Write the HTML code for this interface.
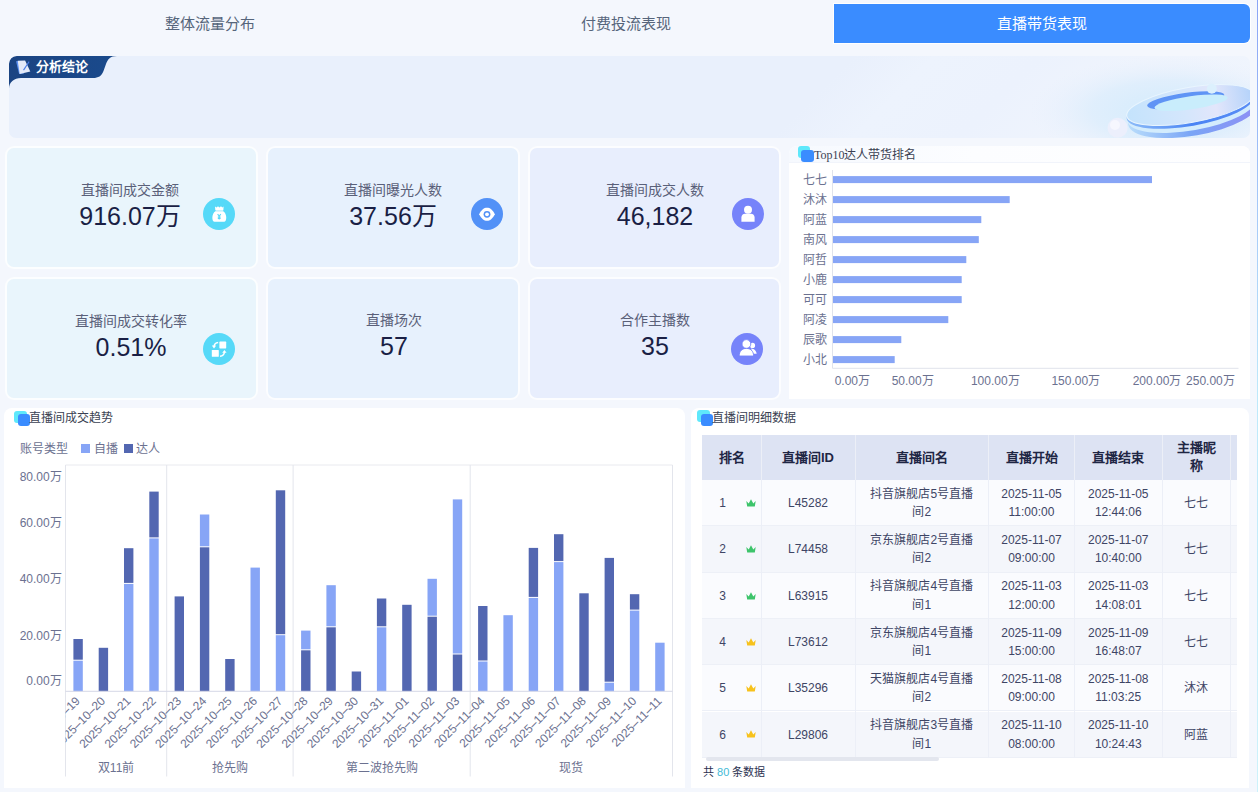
<!DOCTYPE html>
<html lang="zh-CN"><head><meta charset="utf-8">
<style>
*{box-sizing:border-box;margin:0;padding:0}
html,body{width:1258px;height:792px;overflow:hidden;background:#f4f7fd;font-family:"Liberation Sans",sans-serif;position:relative}
.abs{position:absolute}
.tab{position:absolute;top:4px;height:39px;line-height:41px;text-align:center;font-family:"Liberation Serif",serif;font-size:15px;color:#56657b}
.tab.active{background:#3a8cff;color:#fff;border-radius:0 6px 6px 0;box-shadow:0 0 0 1px #fff}
.card{position:absolute;border:2px solid rgba(255,255,255,0.85);border-radius:9px}
.klabel{position:absolute;font-size:14px;color:#5a6079;text-align:center;white-space:nowrap;line-height:16px}
.kval{position:absolute;font-size:25px;color:#1a1f45;text-align:center;white-space:nowrap;line-height:28px}
.kicon{position:absolute;width:32px;height:32px;border-radius:50%}
.panel{position:absolute;background:#fff;border-radius:8px 8px 0 0}
.ptitle{position:absolute;font-family:"Liberation Serif",serif;font-size:12px;color:#3a3f52;white-space:nowrap;line-height:14px}
.sq1{position:absolute;width:12.5px;height:12px;border-radius:3px;background:#5ee8fb}
.sq2{position:absolute;width:12.5px;height:12px;border-radius:3px;background:#3a8cff}
svg text.ax{font-family:"Liberation Sans",sans-serif;font-size:12px;fill:#6b7190}
.thead{position:absolute;background:#dde3f3}
.th{position:absolute;text-align:center;font-weight:bold;font-size:13px;color:#1f2644}
.tr{position:absolute;left:702px;width:535px;border-bottom:1px solid #edf0f7}
.td{position:absolute;text-align:center;font-size:12px;color:#3e4565;white-space:nowrap}
.crown{display:block}
</style></head><body>
<!-- tabs -->
<div class="tab" style="left:2px;width:416px">整体流量分布</div>
<div class="tab" style="left:418px;width:416px">付费投流表现</div>
<div class="tab active" style="left:834px;width:416px">直播带货表现</div>
<div class="abs" style="left:1257px;top:0;width:1px;height:792px;background:linear-gradient(#8aa4f6,#bde9fb 50%,#cdf2fb)"></div>

<!-- banner -->
<div class="abs" style="left:9px;top:56px;width:1241px;height:81.5px;border-radius:7px;background:linear-gradient(135deg,#e9f0fc 0%,#e9f0fc 64%,#edf3fd 70%,#ecf2fd 78%,#eff4fd 86%,#f0f5fd 100%);overflow:hidden">
  <svg class="abs" style="left:0;top:0" width="1241" height="82" viewBox="0 0 1241 82">
    <defs>
      <radialGradient id="glow" cx="0.5" cy="0.5" r="0.5"><stop offset="0" stop-color="#d2ebfc"/><stop offset="0.55" stop-color="#dcedfc" stop-opacity="0.8"/><stop offset="1" stop-color="#e9f0fc" stop-opacity="0"/></radialGradient>
      <linearGradient id="band" x1="0" y1="0" x2="1" y2="0"><stop offset="0" stop-color="#b8dcfb"/><stop offset="0.45" stop-color="#7aa5f6"/><stop offset="1" stop-color="#8f8ef4"/></linearGradient><linearGradient id="stripe" x1="0" y1="0" x2="1" y2="0"><stop offset="0" stop-color="#8dbcf8"/><stop offset="0.5" stop-color="#4a84f4"/><stop offset="1" stop-color="#5b8ef5"/></linearGradient>
      <linearGradient id="face" x1="0" y1="0" x2="1" y2="0"><stop offset="0" stop-color="#c4e3fc"/><stop offset="0.45" stop-color="#d4e6fc"/><stop offset="0.7" stop-color="#e2e6fb"/><stop offset="1" stop-color="#b3d2fa"/></linearGradient>
      <linearGradient id="tagg" x1="0" y1="0" x2="1" y2="0"><stop offset="0" stop-color="#1b4482"/><stop offset="1" stop-color="#1a4a8c"/></linearGradient>
    </defs>
    <ellipse cx="1160" cy="55" rx="140" ry="55" fill="url(#glow)"/>
    <g transform="rotate(-10 1181 50)">
      <ellipse cx="1183" cy="58" rx="66" ry="22" fill="url(#band)"/>
      <ellipse cx="1182" cy="54.5" rx="65" ry="20" fill="#d3ecfd"/>
      <ellipse cx="1181" cy="51.5" rx="64.5" ry="18.5" fill="url(#stripe)"/>
      <ellipse cx="1181" cy="49" rx="64" ry="17.5" fill="url(#face)" stroke="#e9f5fe" stroke-width="1"/>
    </g>
    <g transform="rotate(-8 1180 46)">
      <ellipse cx="1177" cy="44" rx="39" ry="7.5" fill="#5f94f5"/>
      <ellipse cx="1182" cy="47" rx="37" ry="6.5" fill="#c9edfc"/>
    </g>
    <circle cx="1202.8" cy="32.8" r="5" fill="#dcf0fd"/>
    <circle cx="1108.6" cy="71.8" r="10" fill="#eceffc"/><circle cx="1106" cy="69" r="5" fill="#f6f7fe"/>
    <path d="M0 8 A8 8 0 0 1 8 0 L108 0 C101 0 99 3 97 8 L94.5 15 C92.5 20 89.5 22 84 22 L12 22 C5 22 0 26 0 33 Z" fill="url(#tagg)"/>
    <g transform="translate(6.5,4)"><path d="M0.5 1.2 L4 1 L8.5 13.6 L3.6 13.9 Z" fill="#5a8ff0"/><path d="M2.2 0.8 L9.6 0.5 L14.8 11.4 L4.2 13.9 Z" fill="#e4eaf8"/><path d="M7.6 9.8 L13.2 1.2 L14 1.9 L8.5 10.4 Z" fill="#4a7ee8"/></g>
  </svg>
  <div class="abs" style="left:27px;top:3px;font-size:13px;font-weight:bold;color:#fff;line-height:16px;white-space:nowrap">分析结论</div>
</div>

<!-- KPI cards -->
<div class="card" style="left:5px;top:146px;width:253px;height:123px;background:#e9f5fc"></div>
<div class="card" style="left:266px;top:146px;width:254px;height:123px;background:#e7f1fd"></div>
<div class="card" style="left:528px;top:146px;width:253px;height:123px;background:#e8eefd"></div>
<div class="card" style="left:5px;top:277px;width:253px;height:123px;background:#e9f5fc"></div>
<div class="card" style="left:266px;top:277px;width:254px;height:123px;background:#e7f1fd"></div>
<div class="card" style="left:528px;top:277px;width:253px;height:123px;background:#e8eefd"></div>

<div class="klabel" style="left:30px;top:182px;width:200px">直播间成交金额</div>
<div class="kval" style="left:30px;top:202px;width:200px">916.07万</div>
<svg class="abs" style="left:203px;top:198px" width="32" height="32" viewBox="0 0 32 32"><circle cx="16" cy="16" r="16" fill="#56d9f8"/>
<path d="M12 8.6 L13.6 9.6 L15 8.2 L16.4 9.4 L18 8.2 L19.3 9.6 L20.6 8.6 L20.4 12 L12.3 12 Z" fill="#fff"/>
<rect x="12.6" y="12" width="7.6" height="1.2" fill="#c8f2fd"/>
<path d="M12.4 13.2 L20.2 13.2 C24 15 24.2 23.8 21 23.8 L11.6 23.8 C8.4 23.8 8.6 15 12.4 13.2 Z" fill="#fff"/>
<path d="M14.6 16.2 L16.2 18.2 L17.8 16.2 M16.2 18.2 L16.2 21.6 M14.8 19 L17.6 19 M14.8 20.4 L17.6 20.4" stroke="#56d9f8" stroke-width="1.1" fill="none"/>
</svg>

<div class="klabel" style="left:293px;top:182px;width:200px">直播间曝光人数</div>
<div class="kval" style="left:293px;top:202px;width:200px">37.56万</div>
<svg class="abs" style="left:471px;top:198px" width="32" height="32" viewBox="0 0 32 32"><circle cx="16" cy="16" r="16" fill="#5291f7"/>
<path d="M8.2 16.3 C10.5 11.6 13 9.8 16 9.8 C19 9.8 21.5 11.6 23.8 16.3 C21.5 21 19 22.8 16 22.8 C13 22.8 10.5 21 8.2 16.3 Z" fill="#fff"/>
<circle cx="16" cy="16.3" r="3.4" fill="#5291f7"/><circle cx="16" cy="16.3" r="1.9" fill="#fff"/>
</svg>

<div class="klabel" style="left:555px;top:182px;width:200px">直播间成交人数</div>
<div class="kval" style="left:555px;top:202px;width:200px">46,182</div>
<svg class="abs" style="left:731.5px;top:198px" width="32" height="32" viewBox="0 0 32 32"><circle cx="16" cy="16" r="16" fill="#7683fa"/>
<circle cx="16" cy="11.8" r="4" fill="#fff"/>
<path d="M9.4 23.7 L9.4 19.5 C9.4 17.2 11 15.7 13 15.7 L19 15.7 C21 15.7 22.6 17.2 22.6 19.5 L22.6 23.7 Z" fill="#fff"/>
</svg>

<div class="klabel" style="left:31px;top:313px;width:200px">直播间成交转化率</div>
<div class="kval" style="left:31px;top:333px;width:200px">0.51%</div>
<svg class="abs" style="left:203px;top:333px" width="32" height="32" viewBox="0 0 32 32"><circle cx="16" cy="16" r="16" fill="#56d9f8"/>
<rect x="16.4" y="8.6" width="6.8" height="6.8" rx="0.6" fill="#fff"/>
<rect x="8.8" y="17" width="7" height="6.8" rx="0.6" fill="#fff"/>
<path d="M15.2 9.4 C12.6 9.6 11.2 11 11 13.6" stroke="#fff" stroke-width="1.5" fill="none"/>
<path d="M8.8 12.6 L11 15.4 L13.2 12.6 Z" fill="#fff"/>
<path d="M17 23.2 C19.6 23 21.2 21.6 21.4 19" stroke="#fff" stroke-width="1.5" fill="none"/>
<path d="M19.2 19.8 L21.4 17 L23.6 19.8 Z" fill="#fff"/>
</svg>

<div class="klabel" style="left:294px;top:312px;width:200px">直播场次</div>
<div class="kval" style="left:294px;top:332px;width:200px">57</div>

<div class="klabel" style="left:555px;top:312px;width:200px">合作主播数</div>
<div class="kval" style="left:555px;top:332px;width:200px">35</div>
<svg class="abs" style="left:731px;top:333px" width="32" height="32" viewBox="0 0 32 32"><circle cx="16" cy="16" r="16" fill="#7683fa"/>
<circle cx="21.5" cy="12.4" r="2.6" fill="#fff"/>
<path d="M20 15.6 C23.2 15.4 25.4 18.4 25.6 20.8 L22 20.8 Z" fill="#fff"/>
<circle cx="15.4" cy="11" r="4.4" fill="#fff" stroke="#7683fa" stroke-width="0.9"/>
<path d="M8.2 23 C8.2 18.2 11 15.4 15.4 15.4 C19.8 15.4 22.6 18.2 22.6 23 Z" fill="#fff" stroke="#7683fa" stroke-width="0.9"/>
</svg>

<!-- panels -->
<div class="panel" style="left:789px;top:146px;width:461px;height:253px"></div>
<div class="abs" style="left:789px;top:146px;width:461px;height:17px;border-radius:8px 8px 0 0;background:linear-gradient(90deg,#f6f9fe,#fcfdff 40%,#fefeff);border-bottom:1px solid #f1f4fb"></div>
<div class="sq1" style="left:797.5px;top:146px"></div>
<div class="sq2" style="left:801px;top:150px"></div>
<div class="ptitle" style="left:814px;top:148px">Top10达人带货排名</div>

<div class="panel" style="left:4px;top:408px;width:680.5px;height:380px"></div>
<div class="sq1" style="left:14px;top:410.7px"></div>
<div class="sq2" style="left:17.5px;top:414px"></div>
<div class="ptitle" style="left:28.5px;top:411px">直播间成交趋势</div>
<div class="abs" style="left:19.5px;top:441px;font-size:12px;color:#6b7190;line-height:16px">账号类型</div>
<div class="abs" style="left:80.6px;top:444.4px;width:9px;height:9px;background:#87a5f6"></div>
<div class="abs" style="left:94px;top:441px;font-size:12px;color:#6b7190;line-height:16px">自播</div>
<div class="abs" style="left:123.8px;top:444.4px;width:9px;height:9px;background:#5367b1"></div>
<div class="abs" style="left:136.4px;top:441px;font-size:12px;color:#6b7190;line-height:16px">达人</div>

<div class="panel" style="left:690.5px;top:408px;width:558.5px;height:380px"></div>
<div class="sq1" style="left:697px;top:410px"></div>
<div class="sq2" style="left:700.5px;top:414px"></div>
<div class="ptitle" style="left:712px;top:411px">直播间明细数据</div>

<div class="thead" style="left:702px;top:435px;width:535px;height:45px"></div>
<div class="th" style="left:702px;top:435px;width:59px;line-height:45px">排名</div>
<div class="th" style="left:761px;top:435px;width:94px;line-height:45px">直播间ID</div>
<div class="th" style="left:855px;top:435px;width:133.5px;line-height:45px">直播间名</div>
<div class="th" style="left:988.5px;top:435px;width:86.0px;line-height:45px">直播开始</div>
<div class="th" style="left:1074.5px;top:435px;width:87.5px;line-height:45px">直播结束</div>
<div class="th" style="left:1162px;top:439px;width:68.5px;line-height:18px">主播昵<br>称</div>
<div class="tr" style="top:480.0px;height:46.3px;background:#fafbfe"></div>
<div class="td" style="left:714.5px;top:494.1px;width:16px;line-height:18px">1</div>
<div style="position:absolute;left:745.5px;top:498.8px;width:10px;height:8px"><svg class="crown" width="10" height="8" viewBox="0 0 10 8"><path d="M0.3 2 L2.7 4.6 L5 0.3 L7.3 4.6 L9.7 2 L8.8 7.6 L1.2 7.6 Z" fill="#3dc46b"/></svg></div>
<div class="td" style="left:761px;top:494.1px;width:94px;line-height:18px">L45282</div>
<div class="td" style="left:855px;top:484.6px;width:133.5px;line-height:18.5px">抖音旗舰店5号直播<br>间2</div>
<div class="td" style="left:988.5px;top:484.6px;width:86px;line-height:18.5px">2025-11-05<br>11:00:00</div>
<div class="td" style="left:1074.5px;top:484.6px;width:87.5px;line-height:18.5px">2025-11-05<br>12:44:06</div>
<div class="td" style="left:1162px;top:494.1px;width:68.5px;line-height:18px">七七</div>
<div class="tr" style="top:526.3px;height:46.3px;background:#f4f6fb"></div>
<div class="td" style="left:714.5px;top:540.4px;width:16px;line-height:18px">2</div>
<div style="position:absolute;left:745.5px;top:545.1px;width:10px;height:8px"><svg class="crown" width="10" height="8" viewBox="0 0 10 8"><path d="M0.3 2 L2.7 4.6 L5 0.3 L7.3 4.6 L9.7 2 L8.8 7.6 L1.2 7.6 Z" fill="#3dc46b"/></svg></div>
<div class="td" style="left:761px;top:540.4px;width:94px;line-height:18px">L74458</div>
<div class="td" style="left:855px;top:530.9px;width:133.5px;line-height:18.5px">京东旗舰店2号直播<br>间2</div>
<div class="td" style="left:988.5px;top:530.9px;width:86px;line-height:18.5px">2025-11-07<br>09:00:00</div>
<div class="td" style="left:1074.5px;top:530.9px;width:87.5px;line-height:18.5px">2025-11-07<br>10:40:00</div>
<div class="td" style="left:1162px;top:540.4px;width:68.5px;line-height:18px">七七</div>
<div class="tr" style="top:572.6px;height:46.3px;background:#fafbfe"></div>
<div class="td" style="left:714.5px;top:586.8px;width:16px;line-height:18px">3</div>
<div style="position:absolute;left:745.5px;top:591.5px;width:10px;height:8px"><svg class="crown" width="10" height="8" viewBox="0 0 10 8"><path d="M0.3 2 L2.7 4.6 L5 0.3 L7.3 4.6 L9.7 2 L8.8 7.6 L1.2 7.6 Z" fill="#3dc46b"/></svg></div>
<div class="td" style="left:761px;top:586.8px;width:94px;line-height:18px">L63915</div>
<div class="td" style="left:855px;top:577.2px;width:133.5px;line-height:18.5px">抖音旗舰店4号直播<br>间1</div>
<div class="td" style="left:988.5px;top:577.2px;width:86px;line-height:18.5px">2025-11-03<br>12:00:00</div>
<div class="td" style="left:1074.5px;top:577.2px;width:87.5px;line-height:18.5px">2025-11-03<br>14:08:01</div>
<div class="td" style="left:1162px;top:586.8px;width:68.5px;line-height:18px">七七</div>
<div class="tr" style="top:618.9px;height:46.3px;background:#f4f6fb"></div>
<div class="td" style="left:714.5px;top:633.0px;width:16px;line-height:18px">4</div>
<div style="position:absolute;left:745.5px;top:637.8px;width:10px;height:8px"><svg class="crown" width="10" height="8" viewBox="0 0 10 8"><path d="M0.3 2 L2.7 4.6 L5 0.3 L7.3 4.6 L9.7 2 L8.8 7.6 L1.2 7.6 Z" fill="#f7c21c"/></svg></div>
<div class="td" style="left:761px;top:633.0px;width:94px;line-height:18px">L73612</div>
<div class="td" style="left:855px;top:623.5px;width:133.5px;line-height:18.5px">京东旗舰店4号直播<br>间1</div>
<div class="td" style="left:988.5px;top:623.5px;width:86px;line-height:18.5px">2025-11-09<br>15:00:00</div>
<div class="td" style="left:1074.5px;top:623.5px;width:87.5px;line-height:18.5px">2025-11-09<br>16:48:07</div>
<div class="td" style="left:1162px;top:633.0px;width:68.5px;line-height:18px">七七</div>
<div class="tr" style="top:665.2px;height:46.3px;background:#fafbfe"></div>
<div class="td" style="left:714.5px;top:679.4px;width:16px;line-height:18px">5</div>
<div style="position:absolute;left:745.5px;top:684.1px;width:10px;height:8px"><svg class="crown" width="10" height="8" viewBox="0 0 10 8"><path d="M0.3 2 L2.7 4.6 L5 0.3 L7.3 4.6 L9.7 2 L8.8 7.6 L1.2 7.6 Z" fill="#f7c21c"/></svg></div>
<div class="td" style="left:761px;top:679.4px;width:94px;line-height:18px">L35296</div>
<div class="td" style="left:855px;top:669.9px;width:133.5px;line-height:18.5px">天猫旗舰店4号直播<br>间2</div>
<div class="td" style="left:988.5px;top:669.9px;width:86px;line-height:18.5px">2025-11-08<br>09:00:00</div>
<div class="td" style="left:1074.5px;top:669.9px;width:87.5px;line-height:18.5px">2025-11-08<br>11:03:25</div>
<div class="td" style="left:1162px;top:679.4px;width:68.5px;line-height:18px">沐沐</div>
<div class="tr" style="top:711.5px;height:46.3px;background:#f4f6fb"></div>
<div class="td" style="left:714.5px;top:725.6px;width:16px;line-height:18px">6</div>
<div style="position:absolute;left:745.5px;top:730.4px;width:10px;height:8px"><svg class="crown" width="10" height="8" viewBox="0 0 10 8"><path d="M0.3 2 L2.7 4.6 L5 0.3 L7.3 4.6 L9.7 2 L8.8 7.6 L1.2 7.6 Z" fill="#f7c21c"/></svg></div>
<div class="td" style="left:761px;top:725.6px;width:94px;line-height:18px">L29806</div>
<div class="td" style="left:855px;top:716.1px;width:133.5px;line-height:18.5px">抖音旗舰店3号直播<br>间1</div>
<div class="td" style="left:988.5px;top:716.1px;width:86px;line-height:18.5px">2025-11-10<br>08:00:00</div>
<div class="td" style="left:1074.5px;top:716.1px;width:87.5px;line-height:18.5px">2025-11-10<br>10:24:43</div>
<div class="td" style="left:1162px;top:725.6px;width:68.5px;line-height:18px">阿蓝</div>
<div style="position:absolute;left:760.5px;top:435px;width:1px;height:322.8px;background:#eceff7"></div>
<div style="position:absolute;left:854.5px;top:435px;width:1px;height:322.8px;background:#eceff7"></div>
<div style="position:absolute;left:988.0px;top:435px;width:1px;height:322.8px;background:#eceff7"></div>
<div style="position:absolute;left:1074.0px;top:435px;width:1px;height:322.8px;background:#eceff7"></div>
<div style="position:absolute;left:1161.5px;top:435px;width:1px;height:322.8px;background:#eceff7"></div>
<div style="position:absolute;left:1230.0px;top:435px;width:1px;height:322.8px;background:#eceff7"></div>
<div class="abs" style="left:706px;top:757px;width:233px;height:4px;border-radius:2px;background:#e3e6ee"></div>
<div class="abs" style="left:703px;top:764px;font-size:11px;color:#2b3150;line-height:16px;white-space:nowrap">共 <span style="color:#3fbad6">80</span> 条数据</div>

<svg class="abs" style="left:0;top:0" width="1258" height="792" viewBox="0 0 1258 792">
<line x1="65.5" y1="465" x2="672.5" y2="465" stroke="#e9eaef" stroke-width="1"/>
<line x1="65.5" y1="465" x2="65.5" y2="776.5" stroke="#e3e5ec" stroke-width="1"/>
<line x1="166.7" y1="465" x2="166.7" y2="776.5" stroke="#e3e5ec" stroke-width="1"/>
<line x1="293.1" y1="465" x2="293.1" y2="776.5" stroke="#e3e5ec" stroke-width="1"/>
<line x1="470.2" y1="465" x2="470.2" y2="776.5" stroke="#e3e5ec" stroke-width="1"/>
<line x1="672.5" y1="465" x2="672.5" y2="776.5" stroke="#e3e5ec" stroke-width="1"/>
<rect x="73.4" y="660.7" width="9.4" height="30.6" fill="#87a5f6"/>
<rect x="73.4" y="639.0" width="9.4" height="20.7" fill="#5367b1"/>
<rect x="98.7" y="647.8" width="9.4" height="43.5" fill="#5367b1"/>
<rect x="124.0" y="583.9" width="9.4" height="107.4" fill="#87a5f6"/>
<rect x="124.0" y="548.2" width="9.4" height="34.7" fill="#5367b1"/>
<rect x="149.3" y="538.4" width="9.4" height="152.9" fill="#87a5f6"/>
<rect x="149.3" y="491.6" width="9.4" height="45.8" fill="#5367b1"/>
<rect x="174.6" y="596.4" width="9.4" height="94.9" fill="#5367b1"/>
<rect x="199.9" y="547.3" width="9.4" height="144.0" fill="#5367b1"/>
<rect x="199.9" y="514.5" width="9.4" height="31.8" fill="#87a5f6"/>
<rect x="225.2" y="659.0" width="9.4" height="32.3" fill="#5367b1"/>
<rect x="250.5" y="567.6" width="9.4" height="123.7" fill="#87a5f6"/>
<rect x="275.8" y="635.2" width="9.4" height="56.1" fill="#87a5f6"/>
<rect x="275.8" y="490.3" width="9.4" height="143.9" fill="#5367b1"/>
<rect x="301.1" y="650.3" width="9.4" height="41.0" fill="#5367b1"/>
<rect x="301.1" y="630.6" width="9.4" height="18.7" fill="#87a5f6"/>
<rect x="326.4" y="627.3" width="9.4" height="64.0" fill="#5367b1"/>
<rect x="326.4" y="585.2" width="9.4" height="41.1" fill="#87a5f6"/>
<rect x="351.7" y="671.5" width="9.4" height="19.8" fill="#5367b1"/>
<rect x="376.9" y="627.3" width="9.4" height="64.0" fill="#87a5f6"/>
<rect x="376.9" y="598.5" width="9.4" height="27.8" fill="#5367b1"/>
<rect x="402.2" y="604.8" width="9.4" height="86.5" fill="#5367b1"/>
<rect x="427.5" y="616.7" width="9.4" height="74.6" fill="#5367b1"/>
<rect x="427.5" y="578.8" width="9.4" height="36.9" fill="#87a5f6"/>
<rect x="452.8" y="654.5" width="9.4" height="36.8" fill="#5367b1"/>
<rect x="452.8" y="499.4" width="9.4" height="154.1" fill="#87a5f6"/>
<rect x="478.1" y="661.5" width="9.4" height="29.8" fill="#87a5f6"/>
<rect x="478.1" y="606.0" width="9.4" height="54.5" fill="#5367b1"/>
<rect x="503.4" y="615.2" width="9.4" height="76.1" fill="#87a5f6"/>
<rect x="528.7" y="597.9" width="9.4" height="93.4" fill="#87a5f6"/>
<rect x="528.7" y="547.9" width="9.4" height="49.0" fill="#5367b1"/>
<rect x="554.0" y="562.1" width="9.4" height="129.2" fill="#87a5f6"/>
<rect x="554.0" y="534.2" width="9.4" height="26.9" fill="#5367b1"/>
<rect x="579.3" y="593.3" width="9.4" height="98.0" fill="#5367b1"/>
<rect x="604.6" y="682.7" width="9.4" height="8.6" fill="#87a5f6"/>
<rect x="604.6" y="557.9" width="9.4" height="123.8" fill="#5367b1"/>
<rect x="629.9" y="610.6" width="9.4" height="80.7" fill="#87a5f6"/>
<rect x="629.9" y="594.2" width="9.4" height="15.4" fill="#5367b1"/>
<rect x="655.2" y="642.7" width="9.4" height="48.6" fill="#87a5f6"/>
<line x1="65.5" y1="691.3" x2="672.5" y2="691.3" stroke="#d5d8e6" stroke-width="1"/>
<text x="61.7" y="481.1" text-anchor="end" class="ax">80.00万</text>
<text x="61.7" y="527.1" text-anchor="end" class="ax">60.00万</text>
<text x="61.7" y="582.8" text-anchor="end" class="ax">40.00万</text>
<text x="61.7" y="640.3" text-anchor="end" class="ax">20.00万</text>
<text x="61.7" y="685.3" text-anchor="end" class="ax">0.00万</text>
<defs><clipPath id="xclip" clipPathUnits="userSpaceOnUse"><rect x="65.5" y="692" width="620" height="80"/></clipPath></defs>
<g clip-path="url(#xclip)">
<text transform="translate(75.1,696) rotate(-45)" x="0" y="8" text-anchor="end" class="ax">2025–10–19</text>
<text transform="translate(100.4,696) rotate(-45)" x="0" y="8" text-anchor="end" class="ax">2025–10–20</text>
<text transform="translate(125.7,696) rotate(-45)" x="0" y="8" text-anchor="end" class="ax">2025–10–21</text>
<text transform="translate(151.0,696) rotate(-45)" x="0" y="8" text-anchor="end" class="ax">2025–10–22</text>
<text transform="translate(176.3,696) rotate(-45)" x="0" y="8" text-anchor="end" class="ax">2025–10–23</text>
<text transform="translate(201.6,696) rotate(-45)" x="0" y="8" text-anchor="end" class="ax">2025–10–24</text>
<text transform="translate(226.9,696) rotate(-45)" x="0" y="8" text-anchor="end" class="ax">2025–10–25</text>
<text transform="translate(252.2,696) rotate(-45)" x="0" y="8" text-anchor="end" class="ax">2025–10–26</text>
<text transform="translate(277.5,696) rotate(-45)" x="0" y="8" text-anchor="end" class="ax">2025–10–27</text>
<text transform="translate(302.8,696) rotate(-45)" x="0" y="8" text-anchor="end" class="ax">2025–10–28</text>
<text transform="translate(328.1,696) rotate(-45)" x="0" y="8" text-anchor="end" class="ax">2025–10–29</text>
<text transform="translate(353.4,696) rotate(-45)" x="0" y="8" text-anchor="end" class="ax">2025–10–30</text>
<text transform="translate(378.6,696) rotate(-45)" x="0" y="8" text-anchor="end" class="ax">2025–10–31</text>
<text transform="translate(403.9,696) rotate(-45)" x="0" y="8" text-anchor="end" class="ax">2025–11–01</text>
<text transform="translate(429.2,696) rotate(-45)" x="0" y="8" text-anchor="end" class="ax">2025–11–02</text>
<text transform="translate(454.5,696) rotate(-45)" x="0" y="8" text-anchor="end" class="ax">2025–11–03</text>
<text transform="translate(479.8,696) rotate(-45)" x="0" y="8" text-anchor="end" class="ax">2025–11–04</text>
<text transform="translate(505.1,696) rotate(-45)" x="0" y="8" text-anchor="end" class="ax">2025–11–05</text>
<text transform="translate(530.4,696) rotate(-45)" x="0" y="8" text-anchor="end" class="ax">2025–11–06</text>
<text transform="translate(555.7,696) rotate(-45)" x="0" y="8" text-anchor="end" class="ax">2025–11–07</text>
<text transform="translate(581.0,696) rotate(-45)" x="0" y="8" text-anchor="end" class="ax">2025–11–08</text>
<text transform="translate(606.3,696) rotate(-45)" x="0" y="8" text-anchor="end" class="ax">2025–11–09</text>
<text transform="translate(631.6,696) rotate(-45)" x="0" y="8" text-anchor="end" class="ax">2025–11–10</text>
<text transform="translate(656.9,696) rotate(-45)" x="0" y="8" text-anchor="end" class="ax">2025–11–11</text>
</g>
<text x="116.1" y="771.5" text-anchor="middle" class="ax">双11前</text>
<text x="229.9" y="771.5" text-anchor="middle" class="ax">抢先购</text>
<text x="381.6" y="771.5" text-anchor="middle" class="ax">第二波抢先购</text>
<text x="571.3" y="771.5" text-anchor="middle" class="ax">现货</text>
<line x1="832.5" y1="170" x2="832.5" y2="368.3" stroke="#e0e3ec" stroke-width="1"/>
<rect x="833" y="176.1" width="319.0" height="7" fill="#87a5f6"/>
<text x="827" y="183.9" text-anchor="end" class="ax">七七</text>
<rect x="833" y="196.1" width="176.7" height="7" fill="#87a5f6"/>
<text x="827" y="203.9" text-anchor="end" class="ax">沐沐</text>
<rect x="833" y="216.1" width="148.3" height="7" fill="#87a5f6"/>
<text x="827" y="223.9" text-anchor="end" class="ax">阿蓝</text>
<rect x="833" y="236.1" width="145.8" height="7" fill="#87a5f6"/>
<text x="827" y="243.9" text-anchor="end" class="ax">南风</text>
<rect x="833" y="256.1" width="133.3" height="7" fill="#87a5f6"/>
<text x="827" y="263.9" text-anchor="end" class="ax">阿哲</text>
<rect x="833" y="276.1" width="128.7" height="7" fill="#87a5f6"/>
<text x="827" y="283.9" text-anchor="end" class="ax">小鹿</text>
<rect x="833" y="296.1" width="128.7" height="7" fill="#87a5f6"/>
<text x="827" y="303.9" text-anchor="end" class="ax">可可</text>
<rect x="833" y="316.1" width="115.3" height="7" fill="#87a5f6"/>
<text x="827" y="323.9" text-anchor="end" class="ax">阿凌</text>
<rect x="833" y="336.1" width="68.3" height="7" fill="#87a5f6"/>
<text x="827" y="343.9" text-anchor="end" class="ax">辰歌</text>
<rect x="833" y="356.1" width="61.7" height="7" fill="#87a5f6"/>
<text x="827" y="363.9" text-anchor="end" class="ax">小北</text>
<line x1="832.5" y1="368.3" x2="1238.5" y2="368.3" stroke="#e0e3ec" stroke-width="1"/>
<text x="834.7" y="385" text-anchor="start" class="ax">0.00万</text>
<text x="912.7" y="385" text-anchor="middle" class="ax">50.00万</text>
<text x="995.3" y="385" text-anchor="middle" class="ax">100.00万</text>
<text x="1075.8" y="385" text-anchor="middle" class="ax">150.00万</text>
<text x="1157" y="385" text-anchor="middle" class="ax">200.00万</text>
<text x="1234.8" y="385" text-anchor="end" class="ax">250.00万</text>
</svg>
</body></html>
